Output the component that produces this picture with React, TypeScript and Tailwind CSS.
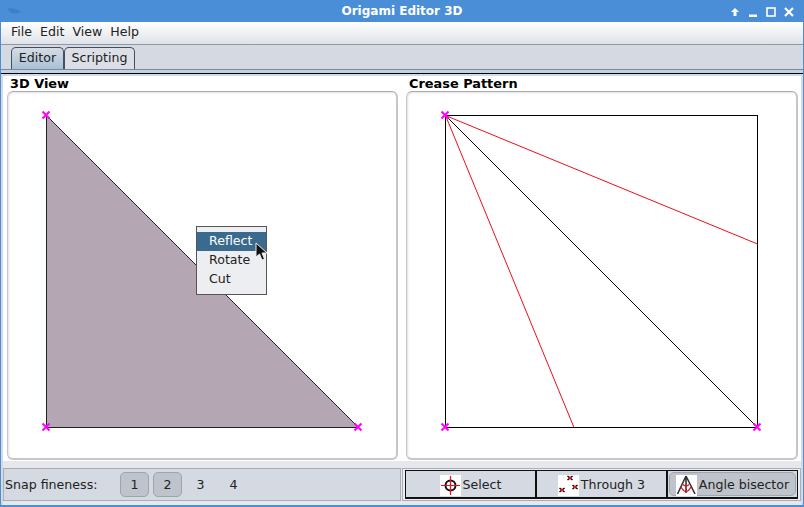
import React from 'react';

const font = { fontFamily: '"DejaVu Sans", sans-serif' };

const Cross = ({ x, y }: { x: number; y: number }) => (
  <path d={`M${x - 3.5} ${y - 3.5}L${x + 3.5} ${y + 3.5}M${x + 3.5} ${y - 3.5}L${x - 3.5} ${y + 3.5}`} stroke="#ff00ff" strokeWidth="2" fill="none" />
);

const FoldedView = () => (
  <svg width="390" height="369" viewBox="7 91 390 369" className="block">
    <polygon points="46.5,115.5 46.5,427.5 358.5,427.5" fill="#b5a6b3" stroke="#222" strokeWidth="1" />
    <Cross x={46} y={115} />
    <Cross x={46} y={427} />
    <Cross x={358} y={427} />
  </svg>
);

const CreasePattern = () => (
  <svg width="391" height="369" viewBox="406 91 391 369" className="block">
    <rect x="445.5" y="115.5" width="312" height="312" fill="none" stroke="#000" strokeWidth="1" />
    <line x1="445.5" y1="115.5" x2="757.5" y2="427.5" stroke="#000" strokeWidth="1" />
    <line x1="445.5" y1="115.5" x2="757.5" y2="244" stroke="#e8101c" strokeWidth="1" />
    <line x1="445.5" y1="115.5" x2="574" y2="427.5" stroke="#e8101c" strokeWidth="1" />
    <Cross x={445} y={115} />
    <Cross x={445} y={427} />
    <Cross x={757} y={427} />
  </svg>
);

const SelectIcon = () => (
  <svg width="21" height="21" viewBox="0 0 21 21" className="bg-white shrink-0">
    <circle cx="10.5" cy="10.5" r="5" fill="none" stroke="#111" strokeWidth="2" />
    <path d="M1 10.5H20M10.5 1V20" stroke="#e8101c" strokeWidth="1.2" />
  </svg>
);

const ThroughIcon = () => (
  <svg width="21" height="21" viewBox="0 0 21 21" className="bg-white shrink-0">
    <path d="M9.5 1L14.5 5M14.5 1L9.5 5M14.5 10L19.5 14M19.5 10L14.5 14M1.5 13L6.5 17M6.5 13L1.5 17" stroke="#000" strokeWidth="1.5" fill="none" />
    <path d="M10.5 2L13.5 4M13.5 2L10.5 4M15.5 11L18.5 13M18.5 11L15.5 13M2.5 14L5.5 16M5.5 14L2.5 16" stroke="#e8101c" strokeWidth="1.5" fill="none" />
  </svg>
);

const BisectorIcon = () => (
  <svg width="21" height="21" viewBox="0 0 21 21" className="bg-white shrink-0">
    <path d="M10 1L1.5 19M10 1L19 19M10 2V18" stroke="#333" strokeWidth="1.6" fill="none" />
    <path d="M5 12Q10 21 15 12" stroke="#e8101c" strokeWidth="1.3" fill="none" />
    <path d="M7 9.5Q10 12.5 13 9.5" stroke="#e8101c" strokeWidth="1.1" fill="none" />
  </svg>
);

const snapButton = 'w-[29px] h-[25px] pt-[2px] flex items-center justify-center rounded-[5px]';
const panel = 'h-[369px] rounded-[6px] border border-[#c4c6c9] border-t-[#a9abae] border-r-2 border-b-2 overflow-hidden box-border shadow-[inset_1px_1px_2px_#e2e2e2]';
const toolButton = 'w-[131px] pt-[2px] flex items-center justify-center gap-[2px] bg-[#d5d9e2] border border-[#111] border-b-2';

const App = () => {
  return (
    <div className="relative w-[804px] h-[507px] overflow-hidden flex flex-col bg-[#4a8ed8] text-[12.6px] text-[#222]" style={font}>
      {/* title bar */}
      <div className="relative h-[22px] shrink-0 flex items-center justify-center text-white font-bold text-[12px]">
        Origami Editor 3D
        <svg width="14" height="6" viewBox="0 0 14 6" className="absolute left-[7px] top-[8px]">
          <path d="M0 0Q8 0 14 4Q7 7 3 4Z" fill="#3f7fc4" />
        </svg>
        <div className="absolute right-[10px] top-[7px] flex items-center gap-[9px]">
          <svg width="10" height="10" viewBox="0 0 10 10"><path d="M5 1L9 5H6.5V9H3.5V5H1Z" fill="#fff" /></svg>
          <svg width="8" height="10" viewBox="0 0 8 10"><path d="M0 7.5H8V10H0Z" fill="#fff" /></svg>
          <svg width="10" height="10" viewBox="0 0 10 10"><rect x="1" y="1" width="8" height="8" fill="none" stroke="#fff" strokeWidth="1.6" /></svg>
          <svg width="10" height="10" viewBox="0 0 10 10" className="-ml-px"><path d="M1 1L9 9M9 1L1 9" stroke="#fff" strokeWidth="2.2" /></svg>
        </div>
      </div>

      <div className="flex-1 flex flex-col mx-px bg-[#d5d9e2]">
        {/* menu bar */}
        <div className="h-[23px] shrink-0 flex items-center gap-[8px] pl-[10px] pb-[2px] bg-gradient-to-b from-white to-[#dfe2e8] border-b border-[#8e97a5]">
          <span>File</span>
          <span>Edit</span>
          <span>View</span>
          <span>Help</span>
        </div>

        {/* tabs */}
        <div className="h-[25px] shrink-0 flex items-end pl-[10px] border-b border-[#7d8796]">
          <div className="w-[53px] h-[22px] flex items-center justify-center rounded-t-[5px] border border-b-0 border-[#45505e] bg-gradient-to-b from-[#d5dce4] to-[#a9c0d6]">Editor</div>
          <div className="w-[71px] h-[22px] flex items-center justify-center rounded-t-[5px] border border-b-0 border-[#45505e] bg-[#dcdfe6]">Scripting</div>
        </div>
        <div className="h-[3px] shrink-0 bg-[#bfd2e6]" />
        <div className="h-px shrink-0 bg-black" />

        {/* content */}
        <div className="flex-1 flex flex-col bg-[#d5d9e2] pt-[2px] px-[2px]">
          <div className="flex gap-[3px] bg-white flex-1">
            <div className="w-[397px] flex flex-col pl-[4px]">
              <div className="h-[15px] font-bold text-[12.9px] leading-[15px] pl-[3px] text-black">3D View</div>
              <div className={`w-[391px] ${panel}`}>
                <div className="-m-px"><FoldedView /></div>
              </div>
            </div>
            <div className="flex-1 flex flex-col pl-[3px]">
              <div className="h-[15px] font-bold text-[12.9px] leading-[15px] pl-[3px] text-black">Crease Pattern</div>
              <div className={`w-[392px] ${panel}`}>
                <div className="-m-px"><CreasePattern /></div>
              </div>
            </div>
          </div>

          {/* bottom bars */}
          <div className="h-[44px] shrink-0 flex gap-px bg-[#e6e8ed] pt-[7px] pb-[4px]">
            <div className="w-[398px] h-[33px] flex items-center border border-[#a8adb7] bg-[#d5d9e2] pl-px text-[#222]">
              <span className="w-[115px] pt-[2px]">Snap fineness:</span>
              <div className="flex gap-[4px]">
                <div className={`${snapButton} bg-[#bfc3cb] border border-[#a0a4ac]`}>1</div>
                <div className={`${snapButton} bg-[#bfc3cb] border border-[#a0a4ac]`}>2</div>
                <div className={snapButton}>3</div>
                <div className={snapButton}>4</div>
              </div>
            </div>
            <div className="w-[399px] h-[33px] flex items-stretch border border-[#a8adb7] px-[2px] py-px bg-[#eceef1]">
              <div className={toolButton}>
                <SelectIcon />
                <span>Select</span>
              </div>
              <div className={toolButton}>
                <ThroughIcon />
                <span>Through 3</span>
              </div>
              <div className="flex-1 flex items-center p-px bg-[#d5d9e2] border border-[#111] border-b-2">
                <div className="flex-1 h-full pt-[2px] flex items-center justify-center gap-[2px] rounded-[5px] bg-[#bfc3cb] border border-[#a0a4ac]">
                  <BisectorIcon />
                  <span>Angle bisector</span>
                </div>
              </div>
            </div>
          </div>
        </div>
      </div>
      <div className="h-[2px] shrink-0" />

      {/* popup menu */}
      <div className="absolute left-[196px] top-[226px] w-[71px] h-[69px] border border-[#555] bg-[#edeef2] pt-[5px]">
        <div className="h-[19px] bg-[#3a6a8e] text-white pl-[12px] leading-[17px]">Reflect</div>
        <div className="h-[19px] pl-[12px] leading-[17px]">Rotate</div>
        <div className="h-[19px] pl-[12px] leading-[17px]">Cut</div>
      </div>
      <svg width="13" height="19" viewBox="0 0 13 19" className="absolute left-[255px] top-[242px]">
        <path d="M1 1V15L4.5 12L7 18L9.5 17L7 11H12Z" fill="#111" stroke="#eee" strokeWidth="1" />
      </svg>
    </div>
  );
};

export default App;
